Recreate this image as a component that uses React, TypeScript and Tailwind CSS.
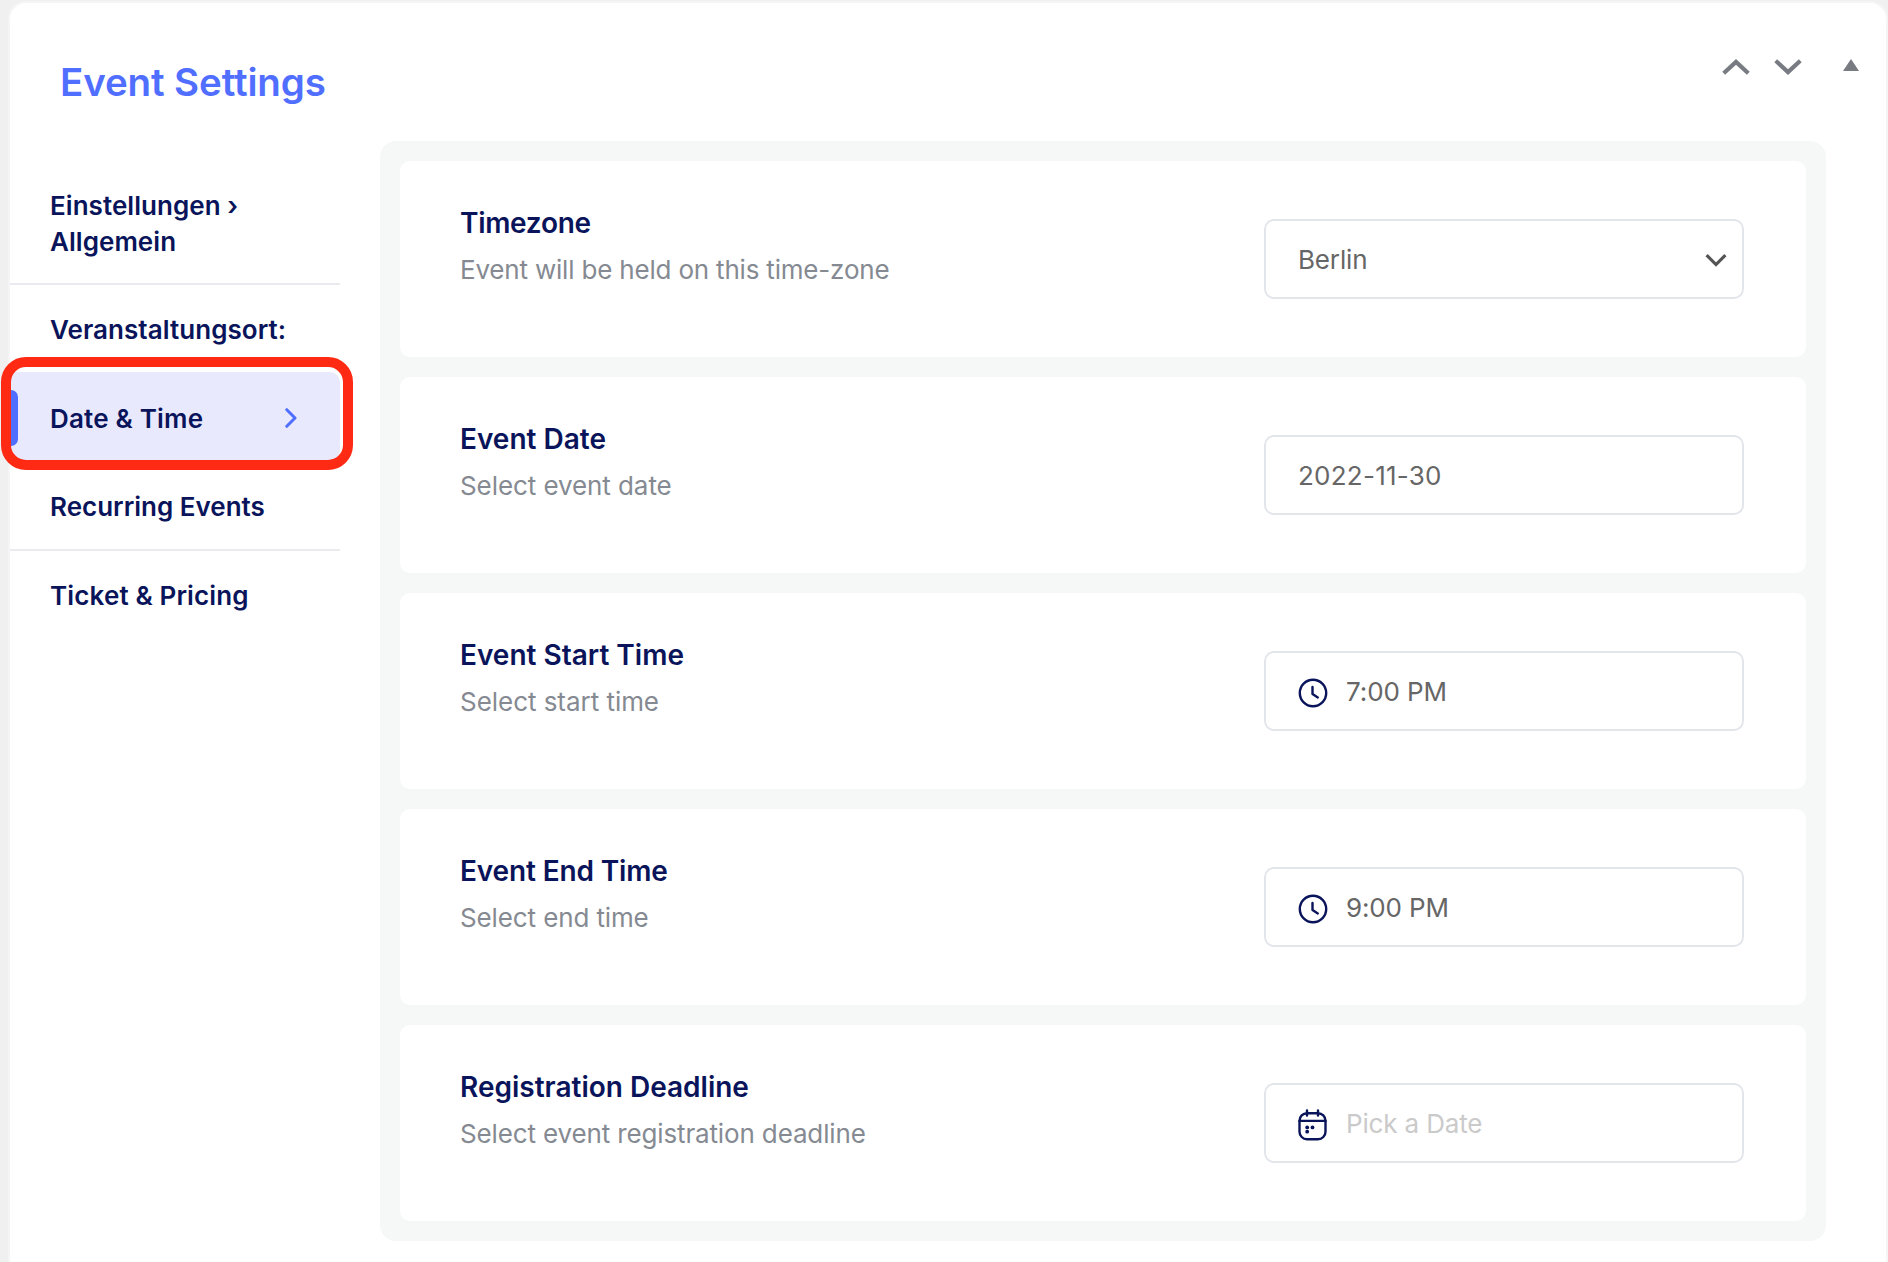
import React from "react";

function ClockIcon() {
  return (
    <svg className="mt-1 shrink-0" width="30" height="30" viewBox="0 0 30 30" fill="none" stroke="#0a145a" strokeWidth="2.4" strokeLinecap="round" strokeLinejoin="round">
      <circle cx="15" cy="15" r="13.2" />
      <path d="M14.5 9v7l5.3 3.4" />
    </svg>
  );
}

function CalendarIcon() {
  return (
    <svg className="mt-1 shrink-0" width="30" height="32" viewBox="0 0 30 32" fill="none" stroke="#0a145a" strokeWidth="2.4" strokeLinecap="round">
      <rect x="1.5" y="4.2" width="26" height="26" rx="7.5" />
      <path d="M1.5 11.9h26M9 1.4v5.2M20 1.4v5.2" />
      <g fill="#0a145a" stroke="none">
        <circle cx="9.2" cy="18.4" r="1.9" />
        <circle cx="14.5" cy="18.4" r="1.9" />
        <circle cx="9.2" cy="22.7" r="1.9" />
      </g>
    </svg>
  );
}

function SelectChevron() {
  return (
    <svg className="mt-1 mr-[15px] ml-auto shrink-0" width="22" height="14" viewBox="0 0 22 14" fill="none" stroke="#555555" strokeWidth="3.2">
      <path d="M1.6 1.2L11 10.6L20.4 1.2" />
    </svg>
  );
}

function MenuItem({ className, children }: { className: string; children: React.ReactNode }) {
  return <li className={`flex items-center pl-10 ${className}`}>{children}</li>;
}

type Field = {
  title: string;
  titleClass?: string;
  hint: string;
  hintClass?: string;
  value: string;
  valueClass?: string;
  icon?: React.ReactNode;
  placeholder?: boolean;
  select?: boolean;
};

const fields: Field[] = [
  { title: "Timezone", titleClass: "tracking-[-0.3px]", hint: "Event will be held on this time-zone", hintClass: "tracking-[-0.19px]", value: "Berlin", valueClass: "tracking-[-0.15px]", select: true },
  { title: "Event Date", hint: "Select event date", hintClass: "tracking-[-0.08px]", value: "2022-11-30", valueClass: "tracking-[0.24px]" },
  { title: "Event Start Time", hint: "Select start time", hintClass: "tracking-[-0.04px]", value: "7:00 PM", valueClass: "tracking-[-0.1px]", icon: <ClockIcon /> },
  { title: "Event End Time", titleClass: "tracking-[-0.14px]", hint: "Select end time", hintClass: "tracking-[-0.12px]", value: "9:00 PM", valueClass: "tracking-[-0.15px]", icon: <ClockIcon /> },
  { title: "Registration Deadline", hint: "Select event registration deadline", hintClass: "tracking-[-0.14px]", value: "Pick a Date", valueClass: "tracking-[-0.15px]", icon: <CalendarIcon />, placeholder: true },
];

function FieldRow({ field }: { field: Field }) {
  return (
    <section className="flex h-[196px] justify-between rounded-[10px] bg-white pr-[62px] pl-[60px]">
      <div className="pt-[42px]">
        <h3 className={`text-[28px] leading-10 font-semibold text-[#0a145a] ${field.titleClass ?? ""}`}>{field.title}</h3>
        <p className={`mt-[9px] text-[26px] leading-9 text-[#858a92] ${field.hintClass ?? ""}`}>{field.hint}</p>
      </div>
      <div className="mt-[58px] flex h-20 w-[480px] items-center rounded-[10px] border-2 border-[#e2e6eb] bg-white pl-8 text-[26px] leading-9">
        {field.icon}
        <span className={`${field.icon ? "ml-[18px]" : ""} ${field.placeholder ? "text-[#cacaca]" : "text-[#666666]"} pt-px ${field.valueClass ?? ""}`}>{field.value}</span>
        {field.select && <SelectChevron />}
      </div>
    </section>
  );
}

export default function App() {
  return (
    <div className="h-[1262px] w-[1888px] overflow-hidden bg-[#f0f0f0] pt-px pl-2 font-[Inter,sans-serif]">
      <div className="relative h-[1280px] w-[1880px] rounded-[18px] border-2 border-[#f5f5f5] bg-white">
        <header className="flex h-[138px] items-start justify-between">
          <h2 className="pt-[54px] pl-[50px] text-[38.5px] leading-[50px] font-semibold tracking-[-0.12px] text-[#506eff]">Event Settings</h2>
          <div className="flex pt-[56px] pr-[26px]">
            <svg width="28" height="16" viewBox="0 0 28 16" fill="none" stroke="#787c82" strokeWidth="4.2">
              <path d="M1.7 14.2L14 2.9L26.3 14.2" />
            </svg>
            <svg className="ml-6" width="28" height="16" viewBox="0 0 28 16" fill="none" stroke="#787c82" strokeWidth="4.2">
              <path d="M1.7 1.8L14 13.1L26.3 1.8" />
            </svg>
            <svg className="ml-[41px]" width="17" height="12" viewBox="0 0 17 12" fill="#787c82">
              <path d="M8 0L16 12H0Z" />
            </svg>
          </div>
        </header>

        <div className="flex items-start">
          <ul className="w-[330px] pt-[22px] text-[26px] leading-9 font-semibold text-[#0a145a]">
            <MenuItem className="h-[122px] border-b-2 border-[#eaeaef] pt-0.5">
              <span className="tracking-[0.05px]">
                Einstellungen ›<br />
                Allgemein
              </span>
            </MenuItem>
            <MenuItem className="h-[87px] pt-0.5 tracking-[0.06px]">Veranstaltungsort:</MenuItem>
            <MenuItem className="relative h-[89px] rounded-r-[10px] bg-[#e9e9fe] pt-[5px]">
              <span className="absolute top-[18px] left-0 h-14 w-2 rounded-r-[7px] bg-[#506eff]" />
              <span className="tracking-[0.2px]">Date &amp; Time</span>
              <svg className="mr-[43px] mb-[3px] ml-auto" width="12" height="20" viewBox="0 0 12 20" fill="none" stroke="#506eff" strokeWidth="3" strokeLinecap="round" strokeLinejoin="round">
                <path d="M1.8 1.7L10 10L1.8 18.3" />
              </svg>
              <span className="absolute -top-[15px] -left-[9px] h-[113px] w-[352px] rounded-[25px] border-10 border-[#ff2a14]" />
            </MenuItem>
            <MenuItem className="h-[90px] border-b-2 border-[#eaeaef] pt-[3px]">Recurring Events</MenuItem>
            <MenuItem className="h-[88px] pt-px tracking-[0.14px]">Ticket &amp; Pricing</MenuItem>
          </ul>

          <main className="ml-10 flex w-[1446px] flex-col gap-5 rounded-2xl bg-[#f5f8f7] p-5">
            {fields.map((f) => (
              <FieldRow key={f.title} field={f} />
            ))}
          </main>
        </div>
      </div>
    </div>
  );
}
